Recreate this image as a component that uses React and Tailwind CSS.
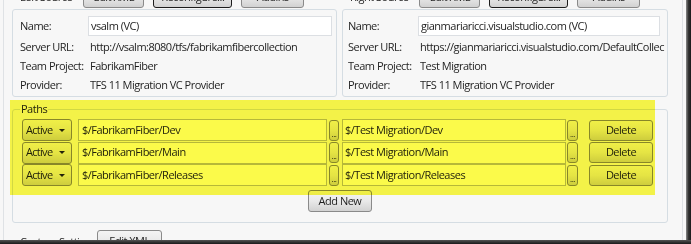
import React from 'react';

const font = { fontFamily: '"Open Sans", "Noto Sans", sans-serif' };

const Btn = ({ children, className = '', dark = false }) => (
  <div
    className={`flex items-center justify-center rounded-[3px] border bg-gradient-to-b from-[#f4f4f4] via-[#e9e9e9] to-[#d2d2d2] text-[#1e1e1e] ${
      dark ? 'border-[#1c1c1c] from-[#fbfbfb]' : 'border-[#8a8a8a]'
    } ${className}`}
  >
    {children}
  </div>
);

const Field = ({ label, children, labelW }) => (
  <div className="flex h-[19px] items-center whitespace-nowrap">
    <span className={labelW}>{label}</span>
    <span className="pl-[2px]">{children}</span>
  </div>
);

const Source = ({ title, name, url, project, labelW, boxClass }) => (
  <div className="flex flex-col">
    {/* header with buttons, cut by the top of the window */}
    <div className="-mt-[14px] flex h-[22px] items-center gap-[9px] whitespace-nowrap">
      <span className="pl-[8px] pr-[2px]">{title}</span>
      <Btn className="h-[22px] w-[61px]">Edit XML</Btn>
      <Btn dark className="h-[22px] w-[79px]">Reconfigure...</Btn>
      <Btn className="h-[22px] w-[63px]">Addins</Btn>
    </div>
    <div className={`mt-[1px] rounded-[3px] border border-[#d5dde3] bg-[#f7f7f7] pt-[6px] ${boxClass}`}>
      <div className="flex h-[20px] items-center whitespace-nowrap">
        <span className={labelW}>Name:</span>
        <div className="flex h-[20px] flex-1 items-center border border-[#dcdfe3] bg-white pl-[2px]">{name}</div>
      </div>
      <div className="mt-[2px]">
        <Field label="Server URL:" labelW={labelW}>{url}</Field>
        <Field label="Team Project:" labelW={labelW}>{project}</Field>
        <Field label="Provider:" labelW={labelW}>TFS 11 Migration VC Provider</Field>
      </div>
      <div className="h-[1px]" />
    </div>
  </div>
);

const rows = ['Dev', 'Main', 'Releases'];

const PathRow = ({ leaf }) => (
  <div className="flex h-[22px] items-center whitespace-nowrap">
    <Btn className="ml-[2px] h-[22px] w-[50px] justify-start pl-[3px] pr-[6px]">
      <span className="tracking-[-0.7px]">Active</span>
      <svg className="ml-auto" width="6" height="3" viewBox="0 0 6 3">
        <path d="M0 0H6L3 3Z" fill="#222" />
      </svg>
    </Btn>
    <div className="ml-[6px] flex h-[22px] w-[249px] items-center border border-[#b9bcbf] bg-white pl-[3px]">
      $/FabrikamFiber/{leaf}
    </div>
    <Btn className="ml-[2px] h-[21px] w-[10px] items-end pb-[2px] text-[8px] leading-none">...</Btn>
    <div className="ml-[3px] flex h-[22px] w-[224px] items-center border border-[#b9bcbf] bg-white pl-[2px]">
      $/Test Migration/{leaf}
    </div>
    <Btn className="ml-[1px] h-[21px] w-[11px] items-end pb-[2px] text-[8px] leading-none">...</Btn>
    <Btn className="ml-[11px] h-[21px] w-[64px]">Delete</Btn>
  </div>
);

export default function App() {
  return (
    <div
      style={font}
      className="flex h-[244px] w-[691px] flex-col overflow-hidden text-[11px] tracking-[-0.5px] text-[#1e1e1e]"
    >
      <div className="flex min-h-0 flex-1">
        <div className="relative flex w-[686px] overflow-hidden bg-[#f7f7f7]">
          <div className="ml-[3px] w-[1px] bg-[#dfe2e5]" />
          <div className="flex flex-1 flex-col pl-[8px]">
            <div className="flex gap-[5px]">
              <Source
                title="Left Source"
                name="vsalm (VC)"
                url="http://vsalm:8080/tfs/fabrikamfibercollection"
                project="FabrikamFiber"
                labelW="w-[75px] shrink-0 pl-[7px]"
                boxClass="w-[325px] pr-[4px]"
              />
              <Source
                title="Right Source"
                name="gianmariaricci.visualstudio.com (VC)"
                url="https://gianmariaricci.visualstudio.com/DefaultCollec"
                project="Test Migration"
                labelW="w-[75px] shrink-0 pl-[5px]"
                boxClass="w-[326px] pr-[7px]"
              />
            </div>

            <fieldset className="mt-[5px] w-[656px] rounded-[3px] border border-[#d5dde3] px-[7px] pb-[10px]">
              <legend className="px-[1px] leading-[14px]">Paths</legend>
              <div className="mt-[3px] flex flex-col gap-[0.5px]">
                {rows.map((r) => (
                  <PathRow key={r} leaf={r} />
                ))}
              </div>
              <div className="mt-[4px] flex justify-center">
                <Btn className="h-[22px] w-[64px]">Add New</Btn>
              </div>
            </fieldset>

            <div className="mt-[7px] flex items-start whitespace-nowrap">
              <span className="w-[85px] pl-[8px] pt-[4px]">Custom Settings</span>
              <Btn className="h-[22px] w-[65px]">Edit XML</Btn>
            </div>
          </div>
          <div className="ml-auto mr-[3px] w-[1px] bg-[#dfe2e5]" />

          {/* yellow highlighter marking over the Paths group */}
          <div className="pointer-events-none absolute left-[10px] top-[100px] h-[95px] w-[645px] bg-[#fbfa4a] mix-blend-multiply" />
        </div>
        <div className="w-[5px] bg-gradient-to-r from-[#8a8a8a] via-[#333] to-[#1a1a1a]" />
      </div>
      <div className="h-[4px] bg-gradient-to-b from-[#555] to-[#1a1a1a]" />
    </div>
  );
}
